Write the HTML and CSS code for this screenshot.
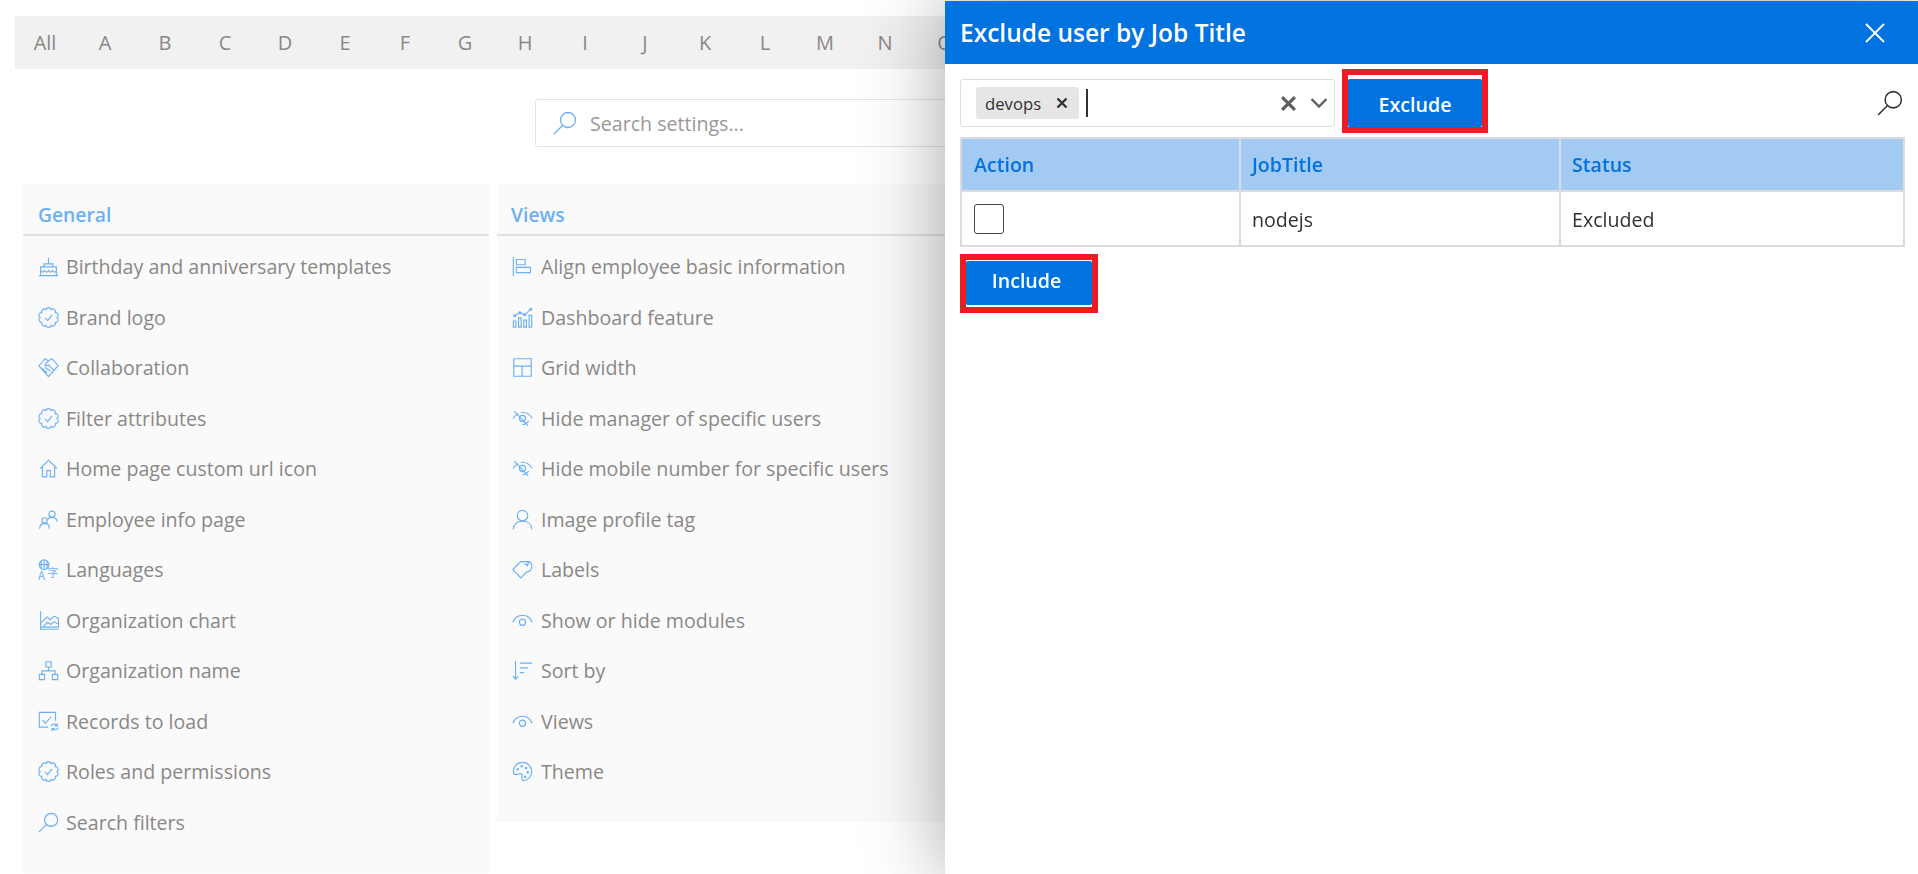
FILE: index.html

```html
<!DOCTYPE html>
<html lang="en">
<head>
  <meta charset="UTF-8" />
  <title>Settings</title>
  <link rel="stylesheet" href="styles.css">
</head>
<body>

<svg class="sprite" width="0" height="0">
  <symbol id="i-cake" viewBox="0 0 24 24"><path d="M1 22.500h22M3 22V12.500h18V22M3 16.500c2 2.500 3 2.500 4.500 0c1.500 2.500 3 2.500 4.500 0c1.500 2.500 3 2.500 4.500 0c1.500 2.500 3 2.500 4.500 0M7 12.500V9h10v3.500M12 9V2"/></symbol>
  <symbol id="i-badge" viewBox="0 0 24 24"><path d="M21.600 12A3.100 3.100 0 0 1 19.770 17.640A3.100 3.100 0 0 1 14.970 21.130A3.100 3.100 0 0 1 9.030 21.130A3.100 3.100 0 0 1 4.230 17.640A3.100 3.100 0 0 1 2.400 12A3.100 3.100 0 0 1 4.230 6.360A3.100 3.100 0 0 1 9.030 2.870A3.100 3.100 0 0 1 14.970 2.870A3.100 3.100 0 0 1 19.770 6.360A3.100 3.100 0 0 1 21.600 12ZM8 12.500l3 3l5-6.500"/></symbol>
  <symbol id="i-hands" viewBox="0 0 24 24"><path d="M1 10L8 2l4 2.500L16 2l7 8L12 22.500ZM12 4.500L8 9c1 1.500 2.500 1.500 4 0l6.500 6.500M5 13l2.500 2.500M8 11.500l3 3M8 16l2 2M11 13.500l3 3"/></symbol>
  <symbol id="i-home" viewBox="0 0 24 24"><path d="M2.500 12L12 2.500L21.500 12M5 9.500V21.500h5v-7h4v7h5V9.500"/></symbol>
  <symbol id="i-people" viewBox="0 0 24 24"><circle cx="16" cy="6" r="3.500"/><circle cx="7.500" cy="13" r="3"/><path d="M2 22.500c0-3.500 2-6 5.500-6s5.500 2.500 5.500 6M11 12c.500-1.500 2.500-2.500 5-2.500c3 0 6 2 6 5"/></symbol>
  <symbol id="i-chart" viewBox="0 0 24 24"><path d="M3 1.500V22h20.500M3 19.500h20.500V10l-5-3l-4.500 4l-3.500-3l-7 6.500M6 19l5-5l3.500 2.500l4-3l5 2.500"/></symbol>
  <symbol id="i-org" viewBox="0 0 24 24"><path d="M9 2h6v6H9zM1.500 16.500h6v6h-6zM16.500 16.500h6v6h-6zM12 8v4.500M4.500 16.500v-4h15v4"/></symbol>
  <symbol id="i-records" viewBox="0 0 24 24"><path d="M20 11V1.500H1.500V18.500h10M5 10.500l3.500 3.500l7-8M15 17.500c.500-2.500 4-3.500 6.500-1M22 14v3h-3M23 19c-.500 2.500-4 3.500-6.500 1M16 23v-3h3"/></symbol>
  <symbol id="i-search" viewBox="0 0 24 24"><circle cx="15" cy="9" r="7.500"/><path d="M9.500 14.500L1 23"/></symbol>
  <symbol id="i-align" viewBox="0 0 24 24"><path d="M1.500 1v22M5 4h10v6H5zM5 13h16v6H5z"/></symbol>
  <symbol id="i-dash" viewBox="0 0 24 24"><path d="M1.500 16h3v7h-3zM7.500 12.500h3V23h-3zM13.500 15h3v8h-3zM19.500 9.500h3V23h-3zM3 10l6-3.500l5.500 2.500l7-6.500"/><circle cx="3" cy="10" r="1"/><circle cx="9" cy="6.500" r="1"/><circle cx="14.500" cy="9" r="1"/><circle cx="21.500" cy="2.500" r="1"/></symbol>
  <symbol id="i-grid" viewBox="0 0 24 24"><path d="M2 2h20v20H2zM2 10.500h20M11.500 10.500V22"/></symbol>
  <symbol id="i-eyeoff" viewBox="0 0 24 24"><path d="M1 12C3 9 5 7.500 7 6.500M10 5.200C15 4 19.500 6.500 23 11.500M19 15c-1.500 2-4 4-7 4.200M2.500 3.500L18.500 20.500"/><circle cx="12" cy="12" r="3.500"/></symbol>
  <symbol id="i-person" viewBox="0 0 24 24"><circle cx="12" cy="7.500" r="6"/><path d="M1.500 23c0-5.500 4-9 10.500-9s10.500 3.500 10.500 9"/></symbol>
  <symbol id="i-tag" viewBox="0 0 24 24"><path d="M1 12L10 3h9.500c2 1 3.500 3.500 3 6.500c-.500 2.500-3 5-6 5.500L10 21.500ZM18 3c1 2 .500 4-1 5.500M14 6c2-.500 3.500.500 3.500 2"/></symbol>
  <symbol id="i-eye" viewBox="0 0 24 24"><path d="M1 14C3 9 7 6 12 6s9 3 11 8"/><circle cx="12" cy="14" r="3.500"/></symbol>
  <symbol id="i-sort" viewBox="0 0 24 24"><path d="M4 1v21M1 18.500l3 3.500l3-3.500M9 3.500h14M9 9h9M9 14.500h5"/></symbol>
  <symbol id="i-theme" viewBox="0 0 24 24"><path d="M12 1.500C5.500 1.500 1.500 6.500 1.500 12c0 2 1 3.500 3 3.500c2.500 0 3.500-1 5-1c2 0 2.500 1.500 2 3.500c-.500 2.500 0 4.500 2 4.500c5-1 9-5 9-10.500S18.500 1.500 12 1.500Z"/><circle cx="6.500" cy="9.500" r=".8"/><circle cx="11" cy="6" r=".8"/><circle cx="16" cy="8" r=".8"/><circle cx="18" cy="13" r=".8"/><circle cx="15" cy="18" r=".8"/></symbol>
</svg>

<div class="page">
  <nav class="alpha">
    <a>All</a><a>A</a><a>B</a><a>C</a><a>D</a><a>E</a><a>F</a><a>G</a><a>H</a><a>I</a><a>J</a><a>K</a><a>L</a><a>M</a><a>N</a><a>O</a>
  </nav>

  <div class="search-row">
    <div class="search-box">
      <svg class="icon"><use href="#i-search"/></svg>
      <input type="text" placeholder="Search settings..." />
    </div>
  </div>

  <div class="cards">
    <section class="card">
      <h3>General</h3>
      <ul>
        <li><svg class="icon"><use href="#i-cake"/></svg>Birthday and anniversary templates</li>
        <li><svg class="icon"><use href="#i-badge"/></svg>Brand logo</li>
        <li><svg class="icon"><use href="#i-hands"/></svg>Collaboration</li>
        <li><svg class="icon"><use href="#i-badge"/></svg>Filter attributes</li>
        <li><svg class="icon"><use href="#i-home"/></svg>Home page custom url icon</li>
        <li><svg class="icon"><use href="#i-people"/></svg>Employee info page</li>
        <li><svg class="icon icon-lang" viewBox="0 0 24 24"><circle cx="7" cy="6.500" r="5.500"/><path d="M1.500 6.500h11M7 1v11M4 2c-1 3-1 6 0 9M10 2c1 3 1 6 0 9"/><text class="i-glyph" x="0" y="23.500" font-size="13">A</text><text class="i-glyph" x="10.500" y="21" font-size="13">字</text></svg>Languages</li>
        <li><svg class="icon"><use href="#i-chart"/></svg>Organization chart</li>
        <li><svg class="icon"><use href="#i-org"/></svg>Organization name</li>
        <li><svg class="icon"><use href="#i-records"/></svg>Records to load</li>
        <li><svg class="icon"><use href="#i-badge"/></svg>Roles and permissions</li>
        <li><svg class="icon"><use href="#i-search"/></svg>Search filters</li>
      </ul>
    </section>
    <section class="card card-views">
      <h3>Views</h3>
      <ul>
        <li><svg class="icon"><use href="#i-align"/></svg>Align employee basic information</li>
        <li><svg class="icon"><use href="#i-dash"/></svg>Dashboard feature</li>
        <li><svg class="icon"><use href="#i-grid"/></svg>Grid width</li>
        <li><svg class="icon"><use href="#i-eyeoff"/></svg>Hide manager of specific users</li>
        <li><svg class="icon"><use href="#i-eyeoff"/></svg>Hide mobile number for specific users</li>
        <li><svg class="icon"><use href="#i-person"/></svg>Image profile tag</li>
        <li><svg class="icon"><use href="#i-tag"/></svg>Labels</li>
        <li><svg class="icon"><use href="#i-eye"/></svg>Show or hide modules</li>
        <li><svg class="icon"><use href="#i-sort"/></svg>Sort by</li>
        <li><svg class="icon"><use href="#i-eye"/></svg>Views</li>
        <li><svg class="icon"><use href="#i-theme"/></svg>Theme</li>
      </ul>
    </section>
  </div>
</div>

<aside class="panel">
  <header class="panel-head">
    <h2>Exclude user by Job Title</h2>
    <svg class="close" viewBox="0 0 20 20"><path d="M1 1l18 18M19 1L1 19"/></svg>
  </header>

  <div class="toolbar">
    <div class="select">
      <span class="chip">devops <svg class="chip-x" viewBox="0 0 12 12"><path d="M1.500 1.500l9 9M10.500 1.500l-9 9"/></svg></span>
      <span class="caret"></span>
      <svg class="sel-clear" viewBox="0 0 16 16"><path d="M2 2l12 12M14 2L2 14"/></svg>
      <svg class="sel-arrow" viewBox="0 0 18 12"><path d="M1.500 2l7.500 7.500L16.500 2"/></svg>
    </div>
    <div class="mark mark-top"><button>Exclude</button></div>
    <svg class="grid-search"><use href="#i-search"/></svg>
  </div>

  <table class="grid">
    <colgroup><col class="col-action"><col class="col-title"><col></colgroup>
    <thead>
      <tr><th>Action</th><th>JobTitle</th><th>Status</th></tr>
    </thead>
    <tbody>
      <tr><td><span class="check"></span></td><td>nodejs</td><td>Excluded</td></tr>
    </tbody>
  </table>

  <div class="mark mark-bottom"><button>Include</button></div>
</aside>

</body>
</html>
```

FILE: styles.css

```css
* { box-sizing: border-box; }
html, body { height: 100%; }
body {
  margin: 0;
  overflow: hidden;
  background: #fff;
  color: #8a8886;
  font-family: "Open Sans", "Noto Sans", sans-serif;
  font-size: 19.6px;
}
.sprite { position: absolute; }
.icon {
  width: 21px;
  height: 21px;
  flex: none;
  fill: none;
  stroke: #6cb0f3;
  stroke-width: 1.3;
}
.icon-lang { overflow: visible; }
.i-glyph { fill: #6cb0f3; stroke: none; font-family: "Noto Sans CJK SC", sans-serif; }

/* page behind the panel */
.page { padding-top: 16px; }
.alpha {
  display: flex;
  align-items: center;
  height: 53px;
  margin-left: 15px;
  background: #f1f1f1;
  font-size: 20px;
}
.alpha a { width: 60px; flex: none; text-align: center; }
.search-row { display: flex; justify-content: center; margin-top: 30px; }
.search-box {
  display: flex;
  align-items: center;
  gap: 11px;
  width: 848px;
  height: 48px;
  padding-left: 17px;
  background: #fff;
  border: 1px solid #e3e3e3;
  border-radius: 3px;
}
.search-box .icon { width: 24px; height: 24px; }
.search-box input {
  flex: 1;
  border: none;
  outline: none;
  font: inherit;
  color: #8a8886;
}
.search-box input::placeholder { color: #9a9896; opacity: 1; }
.cards {
  display: grid;
  grid-template-columns: repeat(3, 466px);
  gap: 8px;
  align-items: start;
  margin-top: 37px;
  padding-left: 23px;
}
.card { background: #fafafa; }
.card h3 {
  margin: 0;
  height: 52px;
  padding: 21px 15px 0;
  border-bottom: 2px solid #e1e1e1;
  color: #6cb0f3;
  font-size: 19.3px;
  font-weight: 600;
  line-height: 20px;
}
.card ul { margin: 0; padding: 5.5px 0 25px; list-style: none; }
.card li {
  display: flex;
  align-items: center;
  gap: 7px;
  height: 50.5px;
  padding-left: 15px;
}
.card-views li { gap: 8px; }
.card-views h3 { padding-left: 14px; }

/* slide-in panel */
.panel {
  position: fixed;
  top: 1px;
  right: 0;
  bottom: 0;
  width: 973px;
  background: #fff;
  color: #323130;
  box-shadow: 0 0 75px rgba(0, 0, 0, .36);
}
.panel-head {
  display: flex;
  align-items: center;
  justify-content: space-between;
  height: 63px;
  padding: 0 33px 0 15px;
  background: #0073e0;
  color: #fff;
}
.panel-head h2 { margin: 0; font-size: 24.5px; font-weight: 600; }
.close { width: 20px; height: 20px; fill: none; stroke: #fff; stroke-width: 1.8; }
.toolbar {
  display: flex;
  align-items: flex-start;
  padding: 5px 15px 0 15px;
}
.select {
  display: flex;
  align-items: center;
  width: 375px;
  height: 48px;
  margin-top: 10px;
  padding: 0 6px 0 15px;
  border: 1px solid #dedede;
  border-radius: 3px;
}
.chip {
  display: flex;
  align-items: center;
  justify-content: space-between;
  width: 103px;
  height: 32px;
  padding: 0 11px 0 9px;
  background: #e6e6e6;
  border-radius: 3px;
  font-size: 16.7px;
}
.chip-x { width: 12px; height: 12px; fill: none; stroke: #333; stroke-width: 2.4; }
.caret { width: 2px; height: 28px; margin-left: 7px; background: #323130; }
.sel-clear {
  width: 17px;
  height: 17px;
  margin-left: auto;
  fill: none;
  stroke: #5f5f5f;
  stroke-width: 3;
}
.sel-arrow {
  width: 18px;
  height: 12px;
  margin-left: 13px;
  fill: none;
  stroke: #5f5f5f;
  stroke-width: 2.4;
}
.mark { border: 6px solid #ed1c24; background: #fff; }
.mark button {
  display: block;
  width: 100%;
  border: none;
  border-radius: 2px;
  background: #0073e0;
  color: #fff;
  font: 600 19.6px "Open Sans", sans-serif;
}
.mark-top { width: 146px; height: 64px; margin-left: 7px; padding-top: 4px; }
.mark-top button { height: 48px; padding: 3px 0 0; }
.mark-bottom { width: 138px; height: 59px; margin: 7px 0 0 15px; padding-bottom: 3px; }
.mark-bottom button { height: 44px; margin-top: 1px; padding: 0 5px 5px 0; }
.grid-search {
  width: 26px;
  height: 26px;
  margin: 21px 0 0 auto;
  fill: none;
  stroke: #323130;
  stroke-width: 1.4;
}
.grid {
  width: 945px;
  margin: 4px 0 0 15px;
  border-collapse: collapse;
  table-layout: fixed;
  font-size: 19.6px;
}
.col-action { width: 279px; }
.col-title { width: 320px; }
.grid th, .grid td {
  padding: 0 12px;
  border: 2px solid #dcdcdc;
  text-align: left;
}
.grid th + th, .grid td + td { padding-left: 11px; }
.grid th {
  height: 53px;
  background: #a3caf2;
  color: #0073e0;
  font-weight: 600;
}
.grid td { height: 55px; padding-top: 2px; }
.check {
  display: block;
  width: 30px;
  height: 30px;
  margin-bottom: 2px;
  background: #fff;
  border: 1px solid #444;
  border-radius: 3px;
}
```
